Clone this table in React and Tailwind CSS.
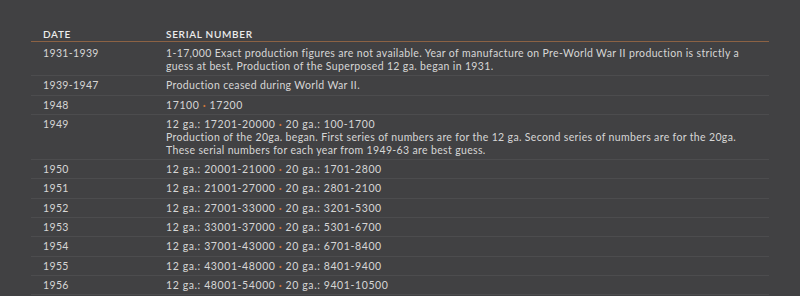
import React from "react";

const Dot = () => <span className="text-[#cc7639] font-bold">·</span>;
const N = ({ children }) => <span className="tracking-[0.6px]">{children}</span>;

const rows = [
  { d: "1931-1939", s: <>1-17,000 Exact production figures are not available. Year of manufacture on Pre-World War II production is strictly a guess at best. Production of the Superposed 12 ga. began in 1931.</>, first: true },
  { d: "1939-1947", s: <>Production ceased during World War II.</> },
  { d: "1948", s: <N>17100 <Dot /> 17200</N> },
  { d: "1949", s: <><N>12 ga.: 17201-20000 <Dot /> 20 ga.: 100-1700</N><br />Production of the 20ga. began. First series of numbers are for the 12 ga. Second series of numbers are for the 20ga.<br />These serial numbers for each year from 1949-63 are best guess.</> },
  { d: "1950", s: <N>12 ga.: 20001-21000 <Dot /> 20 ga.: 1701-2800</N> },
  { d: "1951", s: <N>12 ga.: 21001-27000 <Dot /> 20 ga.: 2801-2100</N> },
  { d: "1952", s: <N>12 ga.: 27001-33000 <Dot /> 20 ga.: 3201-5300</N> },
  { d: "1953", s: <N>12 ga.: 33001-37000 <Dot /> 20 ga.: 5301-6700</N> },
  { d: "1954", s: <N>12 ga.: 37001-43000 <Dot /> 20 ga.: 6701-8400</N> },
  { d: "1955", s: <N>12 ga.: 43001-48000 <Dot /> 20 ga.: 8401-9400</N> },
  { d: "1956", s: <N>12 ga.: 48001-54000 <Dot /> 20 ga.: 9401-10500</N> },
];

export default function App() {
  return (
    <div className="w-[800px] h-[296px] overflow-hidden bg-[#414143] pt-[28px] pl-[31px]" style={{ fontFamily: "Lato, 'Open Sans', sans-serif" }}>
      <div className="w-[738px]">
        <div className="flex border-b border-[#8c6244] text-[10px] leading-[12px] text-[#ececec] font-semibold tracking-[0.7px] pb-[1px]">
          <div className="w-[123px] pl-[12px] shrink-0">DATE</div>
          <div className="pl-[12px]">SERIAL NUMBER</div>
        </div>
        {rows.map((r, i) => (
          <div key={i} className={`flex border-b border-[#4c4c4e] text-[10.5px] leading-[13px] text-[#d6d6d6] tracking-[0.35px] pb-[2.3px] ${r.first ? "pt-[5px]" : "pt-[3px]"}`}>
            <div className="w-[123px] pl-[12px] shrink-0">{r.d}</div>
            <div className="pl-[12px] pr-[14px]">{r.s}</div>
          </div>
        ))}
      </div>
    </div>
  );
}
